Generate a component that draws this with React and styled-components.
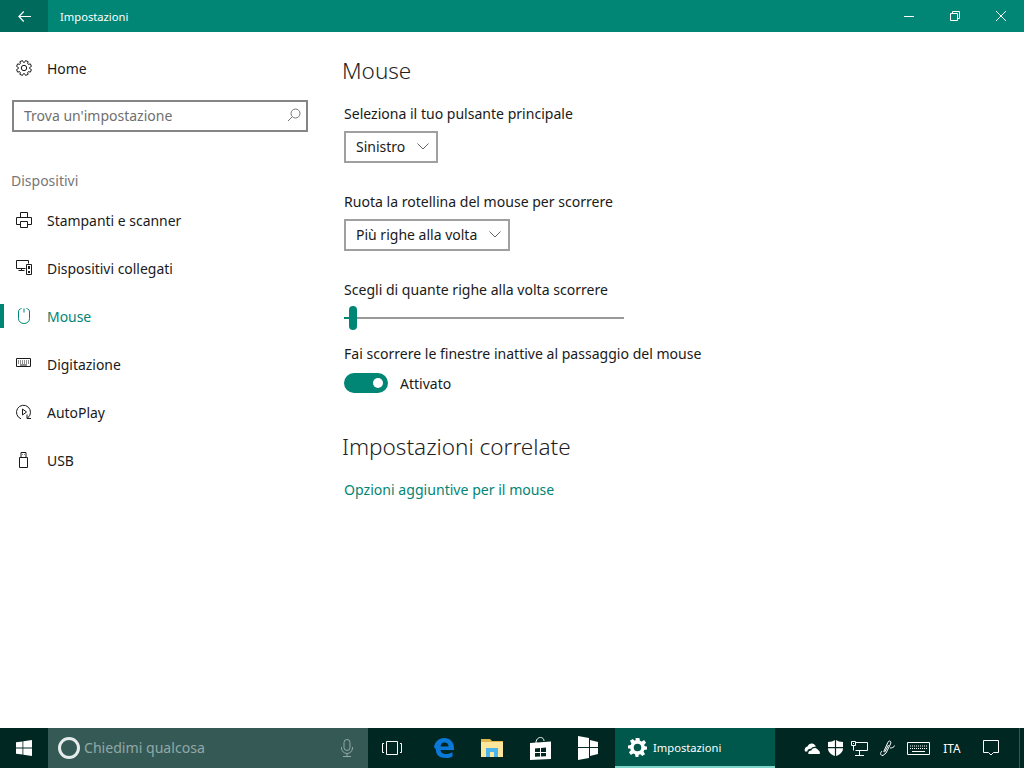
import React from "react";
import styled, { createGlobalStyle } from "styled-components";

const Global = createGlobalStyle`
  html, body { margin: 0; padding: 0; background: #fff; }
  * { box-sizing: border-box; }
  #root { width: 1024px; height: 768px; overflow: hidden; }
`;
const FONT = `"Noto Sans", "Open Sans", sans-serif`;
const ACCENT = "#018574";
const BAR = "#012723";

const Page = styled.div`display:flex;flex-direction:column;width:1024px;height:768px;font-family:${FONT};color:#1a1a1a;`;
const TitleBar = styled.header`height:32px;flex:none;background:${ACCENT};display:flex;align-items:center;color:#fff;`;
const BackButton = styled.div`width:48px;height:32px;background:#006a5c;display:flex;align-items:center;justify-content:center;`;
const TitleText = styled.span`margin-left:12px;font-size:11.2px;flex:1;`;
const WinButton = styled.div`width:46px;height:32px;display:flex;align-items:center;justify-content:center;`;
const Main = styled.main`flex:1;display:flex;min-height:0;`;
const Sidebar = styled.nav`width:320px;flex:none;display:flex;flex-direction:column;padding-top:12px;`;
const NavItem = styled.div`
  height:48px;display:flex;align-items:center;position:relative;font-size:13.95px;
  color:${p => (p.$active ? ACCENT : "#1a1a1a")};
`;
const NavIcon = styled.span`width:47px;flex:none;padding-left:16px;display:flex;align-items:center;`;
const Marker = styled.span`position:absolute;left:0;top:12px;width:4px;height:24px;background:${ACCENT};`;
const SearchBox = styled.div`
  margin:8px 12px 0;height:32px;width:296px;border:2px solid #858585;display:flex;align-items:center;
  justify-content:space-between;padding:0 5px 2px 10px;font-size:14px;color:#6f6f6f;
`;
const SectionLabel = styled.div`margin:37px 0 3px 11px;height:24px;line-height:24px;font-size:14px;color:#767676;`;
const Content = styled.div`flex:1;padding:0 0 0 24px;display:flex;flex-direction:column;align-items:flex-start;`;
const PageTitle = styled.h1`margin:21px 0 0 -2px;font-weight:300;font-size:22.5px;line-height:36px;font-family:${FONT};color:#1f1f1f;`;
const FieldLabel = styled.div`font-size:14.05px;line-height:20px;margin-top:${p => p.$top}px;color:#1a1a1a;`;
const Select = styled.div`
  margin-top:7px;height:32px;border:2px solid #a0a0a0;display:flex;align-items:center;padding:0 7px 2px 10px;font-size:14px;gap:12px;
`;
const Slider = styled.div`margin-top:6px;width:280px;height:24px;display:flex;align-items:center;`;
const Track = styled.div`height:2px;background:#999;flex:1;`;
const TrackFill = styled.div`height:2px;background:${ACCENT};width:5px;`;
const Thumb = styled.div`width:8px;height:24px;border-radius:4px;background:${ACCENT};`;
const ToggleRow = styled.div`margin-top:9px;display:flex;align-items:center;gap:12px;font-size:14px;height:20px;`;
const Toggle = styled.div`width:44px;height:20px;border-radius:10px;background:${ACCENT};display:flex;align-items:center;justify-content:flex-end;padding-right:5px;`;
const Knob = styled.div`width:10px;height:10px;border-radius:50%;background:#fff;`;
const SubTitle = styled.h2`margin:36px 0 0 -2px;font-weight:300;font-size:22.5px;line-height:36px;font-family:${FONT};color:#1f1f1f;`;
const Link = styled.div`margin-top:15px;font-size:14.1px;line-height:20px;color:${ACCENT};`;

const Taskbar = styled.footer`height:40px;flex:none;background:${BAR};display:flex;align-items:stretch;color:#fff;`;
const TaskSlot = styled.div`width:${p => p.$w}px;margin-right:${p => p.$after || 0}px;flex:none;display:flex;align-items:center;justify-content:center;`;
const Cortana = styled.div`width:320px;flex:none;background:#355a56;display:flex;align-items:center;padding:0 15px 0 10px;gap:4px;font-size:14.1px;color:#93a8a5;`;
const Ring = styled.span`width:22px;height:22px;border-radius:50%;border:3px solid #e6eceb;flex:none;`;
const AskText = styled.span`flex:1;padding-bottom:1px;`;
const ActiveApp = styled.div`width:160px;flex:none;background:#00574b;border-bottom:2px solid #7fd6c8;display:flex;align-items:center;padding-left:13px;gap:6px;font-size:11.2px;`;
const Tray = styled.div`flex:1;display:flex;align-items:center;padding-left:29px;`;
const TrayLang = styled.span`font-size:11.8px;width:44px;text-align:center;flex:none;`;
const TrayEdge = styled.div`width:1px;height:40px;margin-left:11px;background:#3c5552;flex:none;`;

const Ico = ({ w = 16, h = 16, children }) => (
  <svg width={w} height={h} viewBox={`0 0 ${w} ${h}`} fill="none" stroke="currentColor">{children}</svg>
);

const gearPath = () => {
  const pts = [];
  for (let i = 0; i < 8; i++) {
    const a = (i * Math.PI) / 4 - Math.PI / 8;
    const step = Math.PI / 14;
    [[5.6, a - step * 1.4], [7.6, a - step * 0.8], [7.6, a + step * 0.8], [5.6, a + step * 1.4]].forEach(([r, t]) =>
      pts.push(`${(8 + r * Math.cos(t)).toFixed(2)} ${(8 + r * Math.sin(t)).toFixed(2)}`));
  }
  return "M" + pts.join("L") + "Z";
};

const HomeIcon = () => <Ico><path d={gearPath()} /><circle cx="8" cy="8" r="2.7" /></Ico>;
const PrinterIcon = () => <Ico><path d="M4.500 5V.5h7V5M4.500 12.500H.5V5.500h15v7h-4M4.500 9.500h7v6h-7z" /></Ico>;
const DevicesIcon = () => <Ico><path d="M9.500 8.500H.5V.5h12v3M2.500 10.500h6M5.500 8.500v2M10.500 4.500h5v10h-5z" /><path d="M12 6h2v3h-2zM12 11h2v2h-2z" fill="currentColor" stroke="none" /></Ico>;
const MouseIcon = () => <Ico><path d="M5.500 .5C3.500 1 2.500 2 2.500 4v6.500c0 3 2.500 5 5.500 5s5.500-2 5.500-5V4c0-2-1-3-3-3.500M8 .5v4" /></Ico>;
const KeyboardIcon = () => <Ico><path d="M.5 2.500h14v8H.5z" /><path d="M2 5h11M2 7h11" strokeDasharray="1 1" /><path d="M4 9h7" /></Ico>;
const AutoPlayIcon = () => <Ico><path d="M5 14.800A7 7 0 1 1 11.500 14M6.500 5l4 3-4 3zM11 10.500v4h4" /></Ico>;
const UsbIcon = () => <Ico><path d="M3.500 5.500h8v10h-8zM5 5.500V.5h5v5M6.500 2.500h.5M8 2.500h.5" /></Ico>;

const Chevron = () => <svg width="12" height="7" viewBox="0 0 12 7" fill="none" stroke="#666"><path d="M.5.500 6 6l5.500-5.500" /></svg>;

const WinLogo = () => (
  <svg width="16" height="16" viewBox="0 0 16 16" fill="#fff"><path d="M0 2.300 6.500 1.400v6.200H0zM7.300 1.300 16 0v7.600H7.300zM0 8.400h6.500v6.200L0 13.700zM7.300 8.400H16V16l-8.700-1.300z" /></svg>
);
const Edge = () => (
  <svg width="20" height="20" viewBox="0 0 20 20"><path fill="#0a78d7" fillRule="evenodd" d="M0 9C1 3.500 5 0 10 0c6 0 10 4 10 10v2H6.500c.3 2.500 2.300 4 5.300 4 2.500 0 4.700-.7 6.700-1.800v4.300c-1.800 1-4 1.500-6.700 1.500C5.500 20 1.500 16.500 2 11.500 1.500 11 .5 10 0 9zM6.500 8.500h8C14.500 6 13 4.500 10.500 4.500S7 6 6.500 8.500z" /></svg>
);
const Folder = () => (
  <svg width="22" height="18" viewBox="0 0 22 18"><path fill="#e2b84c" d="M0 0h9l2 2h11v16H0z" /><path fill="#fbe69b" d="M0 3h22v15H0z" /><path fill="#49b4ee" d="M5 9h12v9h-4v-5H9v5H5z" /></svg>
);
const Store = () => (
  <svg width="21" height="23" viewBox="0 0 21 23"><path fill="#fff" d="M0 6l21-1.500V22l-21 1z" /><path fill="none" stroke="#fff" d="M6 6c0-7 8-7 8-2" /><path fill={BAR} d="M5 11.500l5-.4V15H5zM11 11l5-.4V15h-5zM5 16h5v3.500l-5 .2zM11 16h5v3.200l-5 .2z" /></svg>
);
const Tablet = () => (
  <svg width="20" height="24" viewBox="0 0 20 24" fill="#fff"><path d="M0 0l11 2v9H0zM0 12h11v10L0 24zM12 4l8 2v5h-8zM12 12h8v6l-8 2z" /></svg>
);
const Cog = () => (
  <svg width="19" height="19" viewBox="0 0 20 20"><path fill="#fff" fillRule="evenodd" d="M8 0h4l.6 2.900 1.900.8L17 2l2 3-2 2 .6 1.800L20 9v3l-2.900.6-.7 1.900L18 17l-3 2-2-2-1.800.6L11 20H8l-.6-2.900-1.900-.8L3 18l-2-3 2-2-.7-1.900L0 11V8l2.900-.6.700-1.900L2 3l3-2 2 2 1-.6zM10 6a4 4 0 1 0 0 8 4 4 0 0 0 0-8z" /></svg>
);
const CloudTray = () => (
  <svg width="16" height="11" viewBox="0 0 16 11" fill="#fff"><path d="M1 8.500C0 6 1.500 3.800 3.500 3.500 4.500 1 7 0 9 .8c1.500.5 2.500 1.700 2.800 3-2.300-.5-4 .5-4.800 2C5 5.500 3.500 6.500 3.300 8.500z" /><path d="M4.500 11c-.8-2 .8-3.700 2.800-3.500C8 5.500 10 4.700 12 5.200c1.300.4 2 1.400 2.200 2 1.300.3 1.900 1.700 1.600 3.800z" /></svg>
);
const ShieldTray = () => (
  <svg width="15" height="16" viewBox="0 0 15 16" fill="#fff"><path d="M0 2C3 2 5.300 1 6.900 0v7H0zM8.100 0C9.700 1 12 2 15 2v5H8.100zM0 8.200h6.900V16C3 14.800 0 12 0 8.200zM8.100 8.200H15c0 3.800-3 6.600-6.900 7.800z" /></svg>
);
const NetworkTray = () => (
  <svg width="17" height="15" viewBox="0 0 17 15" fill="none" stroke="#fff"><path d="M4.500 1.500h12v8h-12M7.500 9.500h2M8.500 9.500v4.500M4 14.500h9M.5.500h4v4h-4zM2.500 4.500v5" /><path d="M2 2h1v1H2z" fill="#fff" stroke="none" /></svg>
);
const PenTray = () => (
  <svg width="16" height="16" viewBox="0 0 16 16" fill="none" stroke="#fff"><path d="M4 15.500c-3 0-3-2.500-1-4.500M4 15.500l3-2.500 4.500-9c.8-1.600 0-3.200-1-3-.7 0-1.200.6-1.500 1.200L5 11c-.4 1 .5 1.500 1 .5L9.500 5M11 8c2 0 4-.5 4.500-2.500" /></svg>
);
const KeyboardTray = () => (
  <svg width="23" height="13" viewBox="0 0 23 13" fill="none" stroke="#fff"><path d="M.5.500h22v12H.5z" /><path d="M3 4h17M3 6.500h17" strokeDasharray="1 1" /><path d="M5 9.500h13" /></svg>
);

export default function App() {
  const items = [
    ["Stampanti e scanner", <PrinterIcon />],
    ["Dispositivi collegati", <DevicesIcon />],
    ["Mouse", <MouseIcon />, true],
    ["Digitazione", <KeyboardIcon />],
    ["AutoPlay", <AutoPlayIcon />],
    ["USB", <UsbIcon />],
  ];
  return (
    <Page>
      <Global />
      <TitleBar>
        <BackButton>
          <svg width="13" height="11" viewBox="0 0 13 11" fill="none" stroke="#fff" strokeWidth="1.200"><path d="M13 5.500H1M5.700.5.900 5.500l4.800 5" /></svg>
        </BackButton>
        <TitleText>Impostazioni</TitleText>
        <WinButton><svg width="10" height="10" viewBox="0 0 10 10" stroke="#fff"><path d="M0 5.500h10" /></svg></WinButton>
        <WinButton><svg width="10" height="10" viewBox="0 0 10 10" fill="none" stroke="#fff"><path d="M.5 2.500h7v7h-7zM2.500 2.500v-2h7v7h-2" /></svg></WinButton>
        <WinButton><svg width="10" height="10" viewBox="0 0 10 10" stroke="#fff"><path d="M0 0l10 10M10 0 0 10" /></svg></WinButton>
      </TitleBar>
      <Main>
        <Sidebar>
          <NavItem><NavIcon><HomeIcon /></NavIcon>Home</NavItem>
          <SearchBox>
            Trova un'impostazione
            <svg width="14" height="14" viewBox="0 0 14 14" fill="none" stroke="#777"><circle cx="8.500" cy="5.500" r="4.500" /><path d="M5 9l-4 4" /></svg>
          </SearchBox>
          <SectionLabel>Dispositivi</SectionLabel>
          {items.map(([t, ic, a]) => (
            <NavItem key={t} $active={a}>
              {a && <Marker />}
              <NavIcon>{ic}</NavIcon>{t}
            </NavItem>
          ))}
        </Sidebar>
        <Content>
          <PageTitle>Mouse</PageTitle>
          <FieldLabel $top={15}>Seleziona il tuo pulsante principale</FieldLabel>
          <Select>Sinistro <Chevron /></Select>
          <FieldLabel $top={29}>Ruota la rotellina del mouse per scorrere</FieldLabel>
          <Select>Più righe alla volta <Chevron /></Select>
          <FieldLabel $top={29}>Scegli di quante righe alla volta scorrere</FieldLabel>
          <Slider><TrackFill /><Thumb /><Track /></Slider>
          <FieldLabel $top={14}>Fai scorrere le finestre inattive al passaggio del mouse</FieldLabel>
          <ToggleRow><Toggle><Knob /></Toggle>Attivato</ToggleRow>
          <SubTitle>Impostazioni correlate</SubTitle>
          <Link>Opzioni aggiuntive per il mouse</Link>
        </Content>
      </Main>
      <Taskbar>
        <TaskSlot $w={48}><WinLogo /></TaskSlot>
        <Cortana>
          <Ring />
          <AskText>Chiedimi qualcosa</AskText>
          <svg width="12" height="18" viewBox="0 0 12 18" fill="none" stroke="#93a8a5"><rect x="3" y=".5" width="6" height="11" rx="3" /><path d="M.5 8v1a5.500 5.500 0 0 0 11 0V8M6 15v2.500M2 17.500h8" /></svg>
        </Cortana>
        <TaskSlot $w={48} $after={4}><svg width="20" height="14" viewBox="0 0 20 14" fill="none" stroke="#fff"><path d="M4.500.5h11v13h-11zM2 2.500H.5v9H2M18 2.500h1.500v9H18" /></svg></TaskSlot>
        <TaskSlot $w={48}><Edge /></TaskSlot>
        <TaskSlot $w={48}><Folder /></TaskSlot>
        <TaskSlot $w={48}><Store /></TaskSlot>
        <TaskSlot $w={48} $after={3}><Tablet /></TaskSlot>
        <ActiveApp><Cog />Impostazioni</ActiveApp>
        <Tray>
          <TaskSlot $w={16}><CloudTray /></TaskSlot>
          <TaskSlot $w={30}><ShieldTray /></TaskSlot>
          <TaskSlot $w={18}><NetworkTray /></TaskSlot>
          <TaskSlot $w={38}><PenTray /></TaskSlot>
          <TaskSlot $w={24}><KeyboardTray /></TaskSlot>
          <TrayLang>ITA</TrayLang>
          <TaskSlot $w={34}><svg width="16" height="16" viewBox="0 0 16 16" fill="none" stroke="#fff"><path d="M.5.500h15v12H10.500L8 15l-2.500-2.500H.5z" /></svg></TaskSlot>
          <TrayEdge />
        </Tray>
      </Taskbar>
    </Page>
  );
}
